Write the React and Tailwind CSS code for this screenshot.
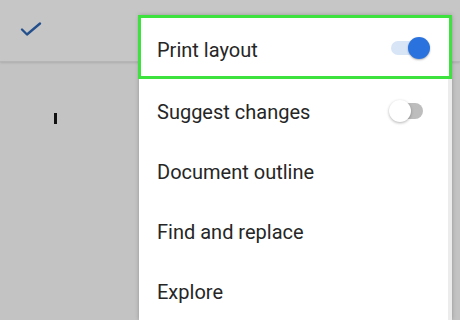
export default function App() {
  const rows = ["Document outline", "Find and replace", "Explore"];
  return (
    <div className="relative w-[460px] h-[320px] overflow-hidden bg-[#c3c3c3] font-['Roboto',sans-serif]">
      {/* top toolbar */}
      <div className="h-[62px] bg-[#c6c6c6] border-b border-[#b5b5b5] shadow-[0_1px_2px_rgba(0,0,0,0.12)] flex items-center pl-[20px]">
        <svg width="22" height="16" viewBox="0 0 22 16" className="-mt-[1px]">
          <path d="M2 7.5 L7 12.5 L20 1.5" fill="none" stroke="#244f8d" strokeWidth="2.3" strokeLinecap="round" strokeLinejoin="round" />
        </svg>
      </div>
      {/* text cursor */}
      <div className="pl-[54px] pt-[51px]">
        <div className="w-[3px] h-[11px] bg-[#111]" />
      </div>

      {/* overflow menu */}
      <div className="absolute left-[139px] top-[15px] bottom-0 w-[313px] bg-white shadow-[0_0_4px_rgba(0,0,0,0.25)] border-r-[4px] border-[#ececec] flex flex-col">
        <div className="-ml-[1px] -mr-[4px] h-[65px] border-[3px] border-[#3ee23e] bg-white flex items-center justify-between pl-[16px] pr-[19px]">
          <span className="text-[20px] font-normal text-[#262626] pt-[5px]">Print layout</span>
          <div className="relative w-[43px] h-[22px] mt-[1px]">
            <div className="absolute left-[4px] top-[4px] w-[32px] h-[14px] rounded-full bg-[#d8e5f7]" />
            <div className="absolute right-0 top-0 w-[22px] h-[22px] rounded-full bg-[#2a73df] shadow-[0_1px_2px_rgba(0,0,0,0.3)]" />
          </div>
        </div>
        <div className="h-[61px] flex items-center justify-between pl-[18px] pr-[25px]">
          <span className="text-[20px] text-[#262626] pt-[5px]">Suggest changes</span>
          <div className="relative w-[34px] h-[22px] mt-[3px]">
            <div className="absolute left-[4px] top-[3px] w-[30px] h-[16px] rounded-full bg-[#bdbdbd]" />
            <div className="absolute left-0 top-0 w-[22px] h-[22px] rounded-full bg-white shadow-[0_1px_3px_rgba(0,0,0,0.3)]" />
          </div>
        </div>
        {rows.map((r) => (
          <div key={r} className="h-[61px] flex items-center pl-[18px]">
            <span className="text-[20px] text-[#262626] pt-[5px]">{r}</span>
          </div>
        ))}
      </div>
    </div>
  );
}
